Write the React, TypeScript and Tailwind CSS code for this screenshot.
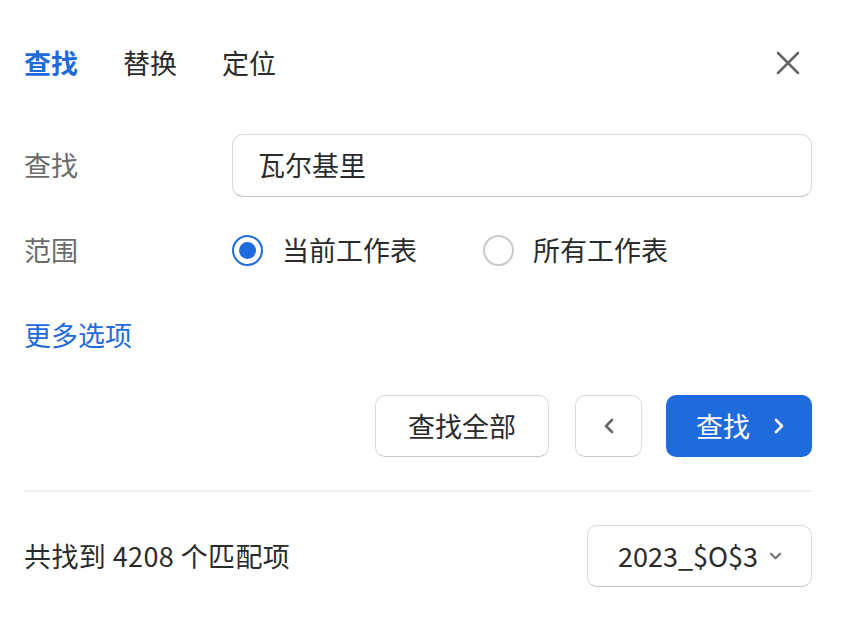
import React from "react";

const font = { fontFamily: '"Noto Sans CJK SC", "Noto Sans", sans-serif' };

const Radio = ({ checked, label }: { checked?: boolean; label: string }) => (
  <label className="flex items-center gap-[19px]">
    <span
      className={
        checked
          ? "w-[31px] h-[31px] rounded-full border-[2.5px] border-[#1f6bde] flex items-center justify-center"
          : "w-[31px] h-[31px] rounded-full border-[2px] border-[#c9c9c9]"
      }
    >
      {checked && <span className="w-[17px] h-[17px] rounded-full bg-[#1f6bde]" />}
    </span>
    <span className="text-[27px] text-[#2b2b2b]">{label}</span>
  </label>
);

const Chevron = ({ dir, color, w = 12, h = 16 }: { dir: "left" | "right" | "down"; color: string; w?: number; h?: number }) => {
  const d =
    dir === "left" ? "M9 2 L3 8 L9 14" : dir === "right" ? "M3 2 L9 8 L3 14" : "M2 3 L7 8 L12 3";
  const vb = dir === "down" ? "0 0 14 11" : "0 0 12 16";
  return (
    <svg width={w} height={h} viewBox={vb} fill="none">
      <path d={d} stroke={color} strokeWidth="2.6" strokeLinecap="round" strokeLinejoin="round" />
    </svg>
  );
};

const App = () => {
  return (
    <div className="w-[845px] h-[623px] bg-white pl-[24px] pr-[33px] flex flex-col" style={font}>
      {/* tabs */}
      <div className="mt-[36px] h-[54px] flex items-center justify-between">
        <div className="flex gap-[45px] text-[27px] text-[#2b2b2b]">
          <span className="font-bold text-[#1f6bde]">查找</span>
          <span>替换</span>
          <span>定位</span>
        </div>
        <svg width="24" height="24" viewBox="0 0 24 24" className="mr-[12px]">
          <path d="M2 2 L22 22 M22 2 L2 22" stroke="#666" strokeWidth="2.6" strokeLinecap="round" />
        </svg>
      </div>

      {/* find */}
      <div className="mt-[44px] h-[63px] flex items-center">
        <span className="w-[208px] text-[27px] text-[#6b6b6b]">查找</span>
        <div className="flex-1 h-full rounded-[11px] border-[1.5px] border-[#dcdcdc] border-b-[#c6c6c6] flex items-center pl-[25px] text-[27px] text-[#2b2b2b]">
          瓦尔基里
        </div>
      </div>

      {/* range */}
      <div className="mt-[33px] h-[40px] flex items-center">
        <span className="w-[208px] text-[27px] text-[#6b6b6b]">范围</span>
        <div className="flex items-center gap-[66px]">
          <Radio checked label="当前工作表" />
          <Radio label="所有工作表" />
        </div>
      </div>

      <div className="mt-[45px] h-[40px] flex items-center text-[27px] text-[#1f6bde]">更多选项</div>

      {/* buttons */}
      <div className="mt-[40px] h-[62px] flex justify-end">
        <button className="w-[174px] h-full rounded-[10px] border-[1.5px] border-[#dcdcdc] border-b-[#c6c6c6] text-[27px] text-[#2b2b2b]">
          查找全部
        </button>
        <button className="ml-[26px] w-[67px] h-full rounded-[10px] border-[1.5px] border-[#dcdcdc] border-b-[#c6c6c6] flex items-center justify-center">
          <Chevron dir="left" color="#666" />
        </button>
        <button className="ml-[24px] w-[146px] h-full rounded-[10px] bg-[#1f6bde] text-white text-[27px] flex items-center justify-center gap-[23px] pl-[3px]">
          <span>查找</span>
          <Chevron dir="right" color="#fff" />
        </button>
      </div>

      <div className="mt-[33px] h-[2px] bg-[#efefef]" />

      {/* result */}
      <div className="mt-[33px] h-[62px] flex items-center justify-between">
        <span className="text-[27px] tracking-[0.4px] text-[#2b2b2b]">共找到 4208 个匹配项</span>
        <div className="w-[225px] h-full rounded-[10px] border-[1.5px] border-[#dcdcdc] border-b-[#c6c6c6] flex items-center pl-[30px] gap-[11px] text-[27px] text-[#2b2b2b]">
          <span>2023_$O$3</span>
          <Chevron dir="down" color="#777" w={13} h={10} />
        </div>
      </div>
    </div>
  );
};

export default App;
